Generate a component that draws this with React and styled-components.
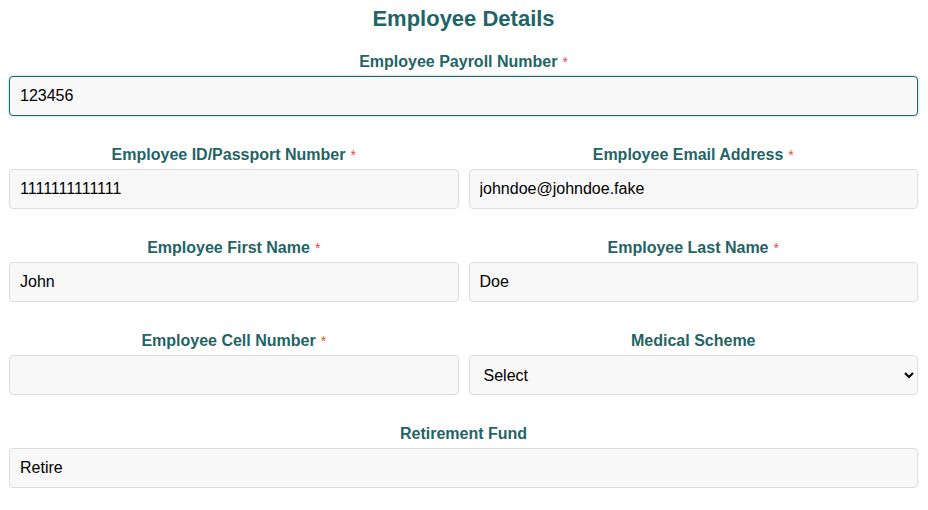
import React from 'react';
import styled, {createGlobalStyle} from 'styled-components';

const GlobalStyle = createGlobalStyle`
	body {
		margin: 0;
		background: #fff;
		font-family: "Liberation Sans", Arial, sans-serif;
	}
`;

const Container = styled.form`
	padding: 0 10px 0 9px;
`;

const Title = styled.h2`
	margin: 6px 0 21px;
	text-align: center;
	font-size: 22px;
	line-height: 26px;
	font-weight: bold;
	color: #1f6466;
`;

const Row = styled.div`
	display: grid;
	grid-template-columns: ${({cols}) => (cols === 2 ? '1fr 1fr' : '1fr')};
	column-gap: 10px;
	margin-bottom: ${({last}) => (last ? '0' : '30px')};
	margin-top: ${({last}) => (last ? '2px' : '0')};
`;

const Field = styled.div`
	display: flex;
	flex-direction: column;
`;

const Label = styled.label`
	display: block;
	margin-bottom: 5px;
	text-align: center;
	font-size: 16px;
	line-height: 18px;
	font-weight: bold;
	color: #1f6466;
`;

const Required = styled.span`
	margin-left: 5px;
	font-size: 14px;
	font-weight: normal;
	vertical-align: top;
	color: #e74c3c;
`;

const Input = styled.input`
	box-sizing: border-box;
	width: 100%;
	height: 40px;
	padding: 0 10px;
	font-family: "Liberation Sans", Arial, sans-serif;
	font-size: 16px;
	color: #000;
	background: #f8f8f8;
	border: 1px solid ${({active}) => (active ? '#1f6466' : '#dddddd')};
	border-radius: 4px;
	box-shadow: ${({active}) => (active ? '0 0 3px rgba(31, 100, 102, 0.35)' : 'none')};
	outline: none;
`;

const Select = styled.select`
	box-sizing: border-box;
	width: 100%;
	height: 40px;
	padding: 0 6px 0 10px;
	font-family: "Liberation Sans", Arial, sans-serif;
	font-size: 16px;
	color: #000;
	background: #f8f8f8;
	border: 1px solid #dddddd;
	border-radius: 4px;
	outline: none;
`;

const FormField = ({label, required, children}) => (
	<Field>
		<Label>
			{label}
			{required && <Required>*</Required>}
		</Label>
		{children}
	</Field>
);

const App = () => (
	<>
		<GlobalStyle/>
		<Container>
			<Title>Employee Details</Title>

			<Row>
				<FormField label="Employee Payroll Number" required>
					<Input active defaultValue="123456"/>
				</FormField>
			</Row>

			<Row cols={2}>
				<FormField label="Employee ID/Passport Number" required>
					<Input defaultValue="1111111111111"/>
				</FormField>
				<FormField label="Employee Email Address" required>
					<Input defaultValue="johndoe@johndoe.fake"/>
				</FormField>
			</Row>

			<Row cols={2}>
				<FormField label="Employee First Name" required>
					<Input defaultValue="John"/>
				</FormField>
				<FormField label="Employee Last Name" required>
					<Input defaultValue="Doe"/>
				</FormField>
			</Row>

			<Row cols={2}>
				<FormField label="Employee Cell Number" required>
					<Input defaultValue=""/>
				</FormField>
				<FormField label="Medical Scheme">
					<Select defaultValue="">
						<option value="">Select</option>
					</Select>
				</FormField>
			</Row>

			<Row last>
				<FormField label="Retirement Fund">
					<Input defaultValue="Retire"/>
				</FormField>
			</Row>
		</Container>
	</>
);

export default App;
